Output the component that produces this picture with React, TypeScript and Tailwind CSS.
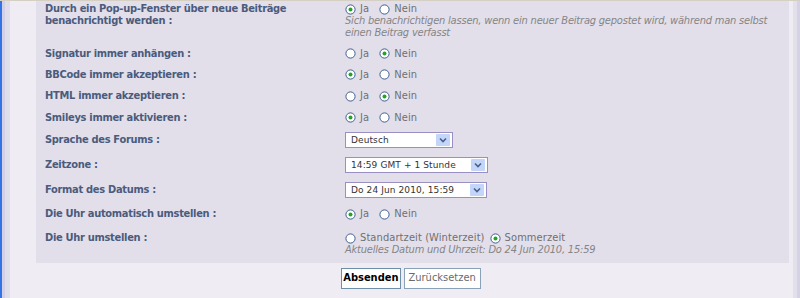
const labelCls = 'font-bold text-[11px] leading-[12px] tracking-[-0.3px] text-[#4b5b7c]';
const valueText = 'text-[11px] leading-[12px] tracking-[0.1px] text-[#707070]';
const hintCls = 'italic text-[11px] leading-[12px] tracking-[-0.2px] text-[#858585]';

function Radio({ checked }: { checked?: boolean }) {
  return (
    <svg width="11" height="11" viewBox="0 0 11 11" className="shrink-0">
      <circle cx="5.5" cy="5.5" r="4.6" fill="#ffffff" stroke="#3f5f8f" strokeWidth="1" />
      {checked && <circle cx="5.5" cy="5.5" r="2" fill="#25a325" />}
    </svg>
  );
}

function Choice({ options, selected, spacing = 'ml-[10px]' }: { options: string[]; selected: number; spacing?: string }) {
  return (
    <div className={`flex items-center ${valueText}`}>
      {options.map((opt, i) => (
        <span key={opt} className={`flex items-center gap-[4px] ${i > 0 ? spacing : ''}`}>
          <Radio checked={i === selected} />
          <span>{opt}</span>
        </span>
      ))}
    </div>
  );
}

function Select({ value, width }: { value: string; width: string }) {
  return (
    <div className={`flex h-[16px] items-center justify-between border border-[#9a8fc2] bg-white pl-[5px] pr-[2px] ${width}`}>
      <span className="font-['DejaVu_Sans'] text-[9px] leading-[10px] tracking-[0.1px] text-[#333]">{value}</span>
      <span className="flex h-[12px] w-[14px] items-center justify-center rounded-[1px] bg-[#c3d5f8]">
        <svg width="8" height="6" viewBox="0 0 8 6">
          <path d="M1 1.5 L4 4.5 L7 1.5" fill="none" stroke="#4a5f8c" strokeWidth="1.6" />
        </svg>
      </span>
    </div>
  );
}

function Row({ label, h, children }: { label: string; h: string; children: React.ReactNode }) {
  return (
    <div className={`flex items-center ${h}`}>
      <div className={`w-[300px] ${labelCls}`}>{label}</div>
      <div>{children}</div>
    </div>
  );
}

export default function App() {
  return (
    <div
      className="flex h-[298px] w-[800px] overflow-hidden border-t border-[#d6d0c4] bg-[#efecf3]"
      style={{ fontFamily: '"DejaVu Sans Condensed", "DejaVu Sans", Verdana, sans-serif' }}
    >
      <div className="w-[2px] bg-[#3273e6]" />
      <div className="w-[3px] bg-[#d3d0e7]" />
      <div className="w-[5px] bg-[#e0deeb]" />
      <div className="flex flex-1 flex-col">
        <div className="ml-[26px] mr-[4px] flex h-[262px] flex-col bg-[#e2dfeb] pl-[9px]">
          <div className="flex h-[42px] items-start pt-[2px]">
            <div className={`w-[300px] ${labelCls}`}>
              Durch ein Pop-up-Fenster über neue Beiträge
              <br />
              benachrichtigt werden :
            </div>
            <div className="flex flex-col">
              <div className="flex h-[12px] items-center">
                <Choice options={['Ja', 'Nein']} selected={0} />
              </div>
              <div className={hintCls}>
                Sich benachrichtigen lassen, wenn ein neuer Beitrag gepostet wird, während man selbst
                <br />
                einen Beitrag verfasst
              </div>
            </div>
          </div>
          <Row label="Signatur immer anhängen :" h="h-[21px]">
            <Choice options={['Ja', 'Nein']} selected={1} />
          </Row>
          <Row label="BBCode immer akzeptieren :" h="h-[21px]">
            <Choice options={['Ja', 'Nein']} selected={0} />
          </Row>
          <Row label="HTML immer akzeptieren :" h="h-[22px]">
            <Choice options={['Ja', 'Nein']} selected={1} />
          </Row>
          <Row label="Smileys immer aktivieren :" h="h-[21px]">
            <Choice options={['Ja', 'Nein']} selected={0} />
          </Row>
          <Row label="Sprache des Forums :" h="h-[24px]">
            <Select value="Deutsch" width="w-[108px]" />
          </Row>
          <Row label="Zeitzone :" h="h-[26px]">
            <Select value="14:59 GMT + 1 Stunde" width="w-[143px]" />
          </Row>
          <Row label="Format des Datums :" h="h-[24px]">
            <Select value="Do 24 Jun 2010, 15:59" width="w-[142px]" />
          </Row>
          <Row label="Die Uhr automatisch umstellen :" h="h-[24px]">
            <Choice options={['Ja', 'Nein']} selected={0} />
          </Row>
          <div className="flex items-start pt-[6px]">
            <div className={`w-[300px] ${labelCls}`}>Die Uhr umstellen :</div>
            <div className="flex flex-col">
              <Choice options={['Standartzeit (Winterzeit)', 'Sommerzeit']} selected={1} spacing="ml-[5px]" />
              <div className={hintCls}>Aktuelles Datum und Uhrzeit: Do 24 Jun 2010, 15:59</div>
            </div>
          </div>
        </div>
        <div className="mr-[14px] mt-[5px] flex justify-center gap-[3px] pl-[33px]">
          <button className="h-[21px] border border-[#6f8ea8] bg-white px-[1px] text-[11px] font-bold text-black">
            Absenden
          </button>
          <button className="h-[21px] border border-[#8aa2b8] bg-white px-[4px] text-[11px] text-[#6a6a6a]">
            Zurücksetzen
          </button>
        </div>
      </div>
      <div className="w-[4px] bg-[#e3e0ec]" />
      <div className="w-[3px] bg-[#d6d2e6]" />
    </div>
  );
}
